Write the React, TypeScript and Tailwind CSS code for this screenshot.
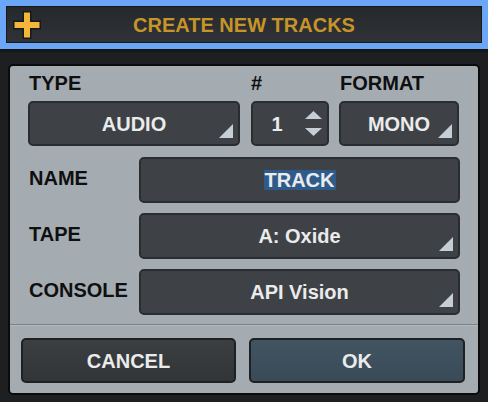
import React from "react";

function Tri() {
  return (
    <svg width="14" height="14" viewBox="0 0 14 14" className="absolute right-[5px] bottom-[6px]">
      <polygon points="14,0 14,14 0,14" fill="#c5ced6" />
    </svg>
  );
}

function Box({ children, className = "", dropdown = false }: { children?: React.ReactNode; className?: string; dropdown?: boolean }) {
  return (
    <div
      className={
        "relative flex items-center justify-center rounded-[5px] border-2 border-[#2a2d30] bg-[#3e4246] text-[#ebebeb] text-[20px] leading-[20px] " +
        className
      }
    >
      {children}
      {dropdown && <Tri />}
    </div>
  );
}

export default function App() {
  return (
    <div className="w-[488px] h-[402px] bg-[#1e1f21] flex flex-col font-['Liberation_Sans',Arial,sans-serif] font-bold overflow-hidden">
      <div className="h-[49px] border-[6px] border-[#6ba7f6] shrink-0">
        <div className="h-full border border-[#17191b] bg-gradient-to-b from-[#26292c] to-[#2f3236] flex items-center">
          <div className="w-[34px] flex items-center justify-end">
            <svg width="28" height="28" viewBox="0 0 28 28">
              <path d="M9.5 0 H18.5 V9.5 H28 V18.5 H18.5 V28 H9.5 V18.5 H0 V9.5 H9.5 Z" fill="#17181a" />
              <path d="M11 1.5 H17 V11 H26.5 V17 H17 V26.5 H11 V17 H1.5 V11 H11 Z" fill="#f3b63a" />
            </svg>
          </div>
          <div className="flex-1 text-center text-[20px] leading-[20px] text-[#c6942a]">CREATE NEW TRACKS</div>
          <div className="w-[34px]" />
        </div>
      </div>
      <div className="h-[15px] shrink-0 bg-gradient-to-b from-[#111213] to-[#1e1f21] to-[30%]" />
      <div className="mx-[8px] h-[331px] shrink-0 border-2 border-[#0b0b0c] rounded-[5px] bg-[#a4abb1] flex flex-col text-[#0e0f10]">
        <div className="flex pt-[7px] pl-[18px]">
          <div className="w-[212px] flex flex-col">
            <div className="h-[20px] text-[20px] leading-[20px] pl-[1px]">TYPE</div>
            <Box className="mt-[8px] h-[45px]" dropdown>AUDIO</Box>
          </div>
          <div className="w-[78px] ml-[11px] flex flex-col">
            <div className="h-[20px] text-[20px] leading-[20px]">#</div>
            <Box className="mt-[8px] h-[45px] !justify-start">
              <span className="w-[48px] text-center">1</span>
              <div className="flex flex-col gap-[9px] ml-[4px]">
                <svg width="17" height="8" viewBox="0 0 17 8">
                  <polygon points="8.5,0 17,8 0,8" fill="#c5ced6" />
                </svg>
                <svg width="17" height="8" viewBox="0 0 17 8">
                  <polygon points="0,0 17,0 8.5,8" fill="#c5ced6" />
                </svg>
              </div>
            </Box>
          </div>
          <div className="w-[120px] ml-[10px] flex flex-col">
            <div className="h-[20px] text-[20px] leading-[20px] pl-[1px]">FORMAT</div>
            <Box className="mt-[8px] h-[45px]" dropdown>MONO</Box>
          </div>
        </div>

        <div className="flex flex-col gap-[10px] mt-[11px] pl-[18px]">
          <div className="flex items-center">
            <div className="w-[111px] pl-[1px] pb-[4px] text-[20px] leading-[20px]">NAME</div>
            <Box className="w-[321px] h-[46px]">
              <span className="bg-[#2f5b8b] px-[1px] leading-[20px]">TRACK</span>
            </Box>
          </div>
          <div className="flex items-center">
            <div className="w-[111px] pl-[1px] pb-[4px] text-[20px] leading-[20px]">TAPE</div>
            <Box className="w-[321px] h-[46px]" dropdown>A: Oxide</Box>
          </div>
          <div className="flex items-center">
            <div className="w-[111px] pl-[1px] pb-[4px] text-[20px] leading-[20px]">CONSOLE</div>
            <Box className="w-[321px] h-[46px]" dropdown>API Vision</Box>
          </div>
        </div>

        <div className="mt-[9px] h-[2px] border-t border-[#7c8388] border-b border-b-[#b3babf]" />

        <div className="flex mt-[12px] pl-[11px] gap-[13px]">
          <button className="w-[215px] h-[45px] rounded-[5px] border-2 border-[#1e2022] bg-gradient-to-b from-[#3b3f42] to-[#323538] text-[#ebebeb] text-[20px] leading-[20px] font-bold">
            CANCEL
          </button>
          <button className="w-[216px] h-[45px] rounded-[5px] border-2 border-[#1e2022] bg-gradient-to-b from-[#415462] to-[#3a4b58] text-[#ebebeb] text-[20px] leading-[20px] font-bold">
            OK
          </button>
        </div>
      </div>
    </div>
  );
}
